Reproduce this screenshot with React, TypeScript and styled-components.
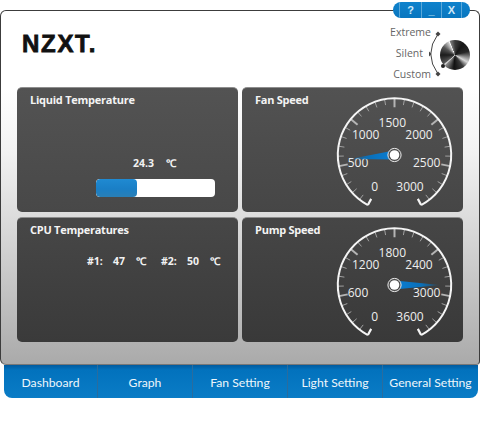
import React from "react";
import styled, { createGlobalStyle } from "styled-components";

const Global = createGlobalStyle`
  html, body { margin: 0; padding: 0; background: #fff; }
  body { width: 480px; height: 440px; overflow: hidden; font-family: "Open Sans", "Liberation Sans", sans-serif; }
`;

const Page = styled.div`
  width: 480px;
  height: 440px;
  padding-top: 10px;
  box-sizing: border-box;
  position: relative;
`;

const WindowFrame = styled.div`
  box-sizing: border-box;
  width: 480px;
  height: 355px;
  border: 1px solid #3c3c3c;
  border-bottom: 1px solid #777;
  border-radius: 6px 6px 4px 6px;
  background: linear-gradient(180deg, #ffffff 0%, #ffffff 22%, #f2f2f2 40%, #d8d8d8 62%, #b4b4b4 92%, #aaaaaa 100%);
  padding: 0 16px;
`;

const Header = styled.div`
  height: 76px;
  display: flex;
  justify-content: space-between;
  align-items: flex-start;
`;

const Logo = styled.div`
  font-family: "Liberation Sans", Arial, sans-serif;
  font-weight: 700;
  font-size: 24px;
  line-height: 24px;
  color: #111;
  padding: 21px 0 0 5px;
  letter-spacing: 1.7px;
  -webkit-text-stroke: 0.8px #111;
`;

const ProfilePicker = styled.div`
  display: flex;
  align-items: flex-start;
  margin-top: 11px;
  margin-right: -7px;
`;

const ProfileLabels = styled.div`
  display: flex;
  flex-direction: column;
  align-items: flex-end;
  font-family: "Open Sans", sans-serif;
  font-size: 10.5px;
  line-height: 21px;
  color: #666;
`;

const ProfileLabel = styled.span<{ $shift: number }>`
  margin-right: ${(p) => p.$shift}px;
`;

const SelectorArc = styled.svg`
  flex: none;
  width: 14px;
  height: 63px;
  margin-left: -4px;
  margin-right: -1px;
`;

const Knob = styled.div`
  position: relative;
  flex: none;
  width: 30px;
  height: 30px;
  margin-top: 18px;
  border-radius: 50%;
  background: conic-gradient(#3a3a3a 0deg, #161616 35deg, #262626 75deg, #aaa 108deg, #d8d8d8 120deg, #3a3a3a 145deg, #111 185deg, #8a8a8a 222deg, #eee 227deg, #555 233deg, #1c1c1c 270deg, #555 305deg, #ccc 333deg, #fff 337deg, #777 341deg, #3a3a3a 360deg);
  &::after {
    content: "";
    position: absolute;
    left: 1px;
    bottom: 2px;
    width: 4px;
    height: 4px;
    border-radius: 50%;
    background: #222;
  }
`;

const Panels = styled.div`
  display: grid;
  grid-template-columns: 221px 221px;
  grid-template-rows: 125px 125px;
  gap: 5px 4px;
`;

const Panel = styled.section<{ $top: string; $bottom: string }>`
  box-sizing: border-box;
  display: flex;
  justify-content: space-between;
  border-radius: 5px;
  border-top: 1px solid #8e8e8e;
  background: linear-gradient(180deg, ${(p) => p.$top}, ${(p) => p.$bottom});
  color: #fff;
  overflow: hidden;
`;

const PanelBody = styled.div`
  flex: 1;
  display: flex;
  flex-direction: column;
  padding: 4px 0 0 13px;
`;

const PanelTitle = styled.h2`
  margin: 0;
  font-family: "Open Sans", sans-serif;
  font-weight: 700;
  font-size: 11px;
  line-height: 15px;
  letter-spacing: -0.25px;
  color: #f4f4f4;
`;

const Reading = styled.div`
  display: grid;
  grid-template-columns: 33px auto;
  font-weight: 700;
  font-size: 10.5px;
  line-height: 14px;
  color: #f2f2f2;
  margin: 49px 0 0 103px;
`;

const BarTrack = styled.div`
  width: 119px;
  height: 18px;
  margin: 9px 0 0 66px;
  border-radius: 4px;
  background: #fff;
  overflow: hidden;
`;

const BarFill = styled.div`
  height: 100%;
  border-radius: 4px;
  background: linear-gradient(180deg, #1f8ad2 0%, #1a7fc6 55%, #2a7fb6 100%);
`;

const CpuReading = styled.div`
  display: grid;
  grid-template-columns: 26px 23px 25px 26px 23px auto;
  margin: 17px 0 0 57px;
  font-weight: 700;
  font-size: 10.5px;
  line-height: 14px;
  color: #f2f2f2;
`;

const GaugeSvg = styled.svg`
  flex: none;
  width: 124px;
  height: 125px;
  margin-top: -1px;
  margin-right: 6px;
`;

const TabBar = styled.nav`
  box-sizing: border-box;
  display: flex;
  width: 474px;
  height: 33px;
  margin-left: 4px;
  background: linear-gradient(180deg, #015b9f 0px, #0272bd 5px, #0a7cc6 100%);
  border-radius: 0 0 8px 8px;
  overflow: hidden;
`;

const Tab = styled.div<{ $w: number }>`
  box-sizing: border-box;
  width: ${(p) => p.$w}px;
  flex: none;
  display: flex;
  align-items: center;
  justify-content: center;
  padding-top: 2px;
  font-family: "Lato", sans-serif;
  font-size: 12.2px;
  color: #eef6fb;
  border-right: 1px solid #2a6c9e;
  &:last-child { border-right: none; }
`;

const WindowControls = styled.div`
  position: absolute;
  left: 393px;
  top: 2px;
  width: 77px;
  height: 16px;
  display: flex;
  border-radius: 8px;
  overflow: hidden;
  background: linear-gradient(180deg, #0f82cc, #0876bf);
  font-family: "Liberation Sans", sans-serif;
  font-weight: 700;
  font-size: 11px;
  color: #cfe8f8;
`;

const ControlButton = styled.div<{ $w: number }>`
  width: ${(p) => p.$w}px;
  flex: none;
  box-sizing: border-box;
  display: flex;
  align-items: center;
  justify-content: center;
  border-right: 1px solid #5aa8da;
  &:last-child { border-right: none; }
`;

type GaugeProps = { labels: number[]; needle: { x: number; y: number }; id: string };

const CX = 61.5;
const CY = 68;
const R = 56.7;

function polar(deg: number, r: number) {
  const a = (deg * Math.PI) / 180;
  return { x: CX + r * Math.sin(a), y: CY - r * Math.cos(a) };
}

const LABEL_POS = [
  { x: 41.7, y: 104 },
  { x: 25, y: 80 },
  { x: 32.7, y: 52 },
  { x: 59.3, y: 39.5 },
  { x: 86, y: 52 },
  { x: 93.7, y: 80 },
  { x: 77, y: 104 },
];

function Gauge({ labels, needle, id }: GaugeProps) {
  const start = -152;
  const step = 304 / 6;
  const ticks: React.ReactNode[] = [];
  for (let i = 1; i < 30; i++) {
    const deg = start + (i * step) / 5;
    const major = i % 5 === 0;
    const p1 = polar(deg, R);
    const p2 = polar(deg, major ? R - 9 : R - 6);
    ticks.push(
      <line key={i} x1={p1.x} y1={p1.y} x2={p2.x} y2={p2.y} stroke={major ? "#b4b4b4" : "#a0a0a0"} strokeWidth={major ? 2 : 1} />
    );
  }
  const s = polar(start, R);
  const e = polar(-start, R);
  const sIn = polar(start, R - 7);
  const eIn = polar(-start, R - 7);
  const dx = needle.x - CX;
  const dy = needle.y - CY;
  const len = Math.hypot(dx, dy);
  const nx = (-dy / len) * 4.5;
  const ny = (dx / len) * 4.5;
  return (
    <GaugeSvg viewBox="0 0 124 125">
      <defs>
        <linearGradient id={id} gradientUnits="userSpaceOnUse" x1={CX} y1={CY} x2={needle.x} y2={needle.y}>
          <stop offset="0.1" stopColor="#0a7cd0" />
          <stop offset="0.6" stopColor="#0a6fb8" />
          <stop offset="1" stopColor="#0a6fb8" stopOpacity="0.1" />
        </linearGradient>
      </defs>
      {ticks}
      <path d={`M${s.x} ${s.y} A${R} ${R} 0 1 1 ${e.x} ${e.y}`} fill="none" stroke="#f4f4f4" strokeWidth={2} />
      <line x1={s.x} y1={s.y} x2={sIn.x} y2={sIn.y} stroke="#f4f4f4" strokeWidth={2.2} />
      <line x1={e.x} y1={e.y} x2={eIn.x} y2={eIn.y} stroke="#f4f4f4" strokeWidth={2.2} />
      {labels.map((l, i) => (
        <text key={l} x={LABEL_POS[i].x} y={LABEL_POS[i].y} textAnchor="middle" fontFamily="'Open Sans', sans-serif" fontSize={12} fill="#efefef">
          {l}
        </text>
      ))}
      <polygon points={`${CX + nx},${CY + ny} ${CX - nx},${CY - ny} ${needle.x},${needle.y}`} fill={`url(#${id})`} />
      <circle cx={CX} cy={CY} r={6.6} fill="#4a4a4a" stroke="#eee" strokeWidth={1} />
      <circle cx={CX} cy={CY} r={4.8} fill="#fff" />
    </GaugeSvg>
  );
}

export default function App() {
  return (
    <Page>
      <Global />
      <WindowFrame>
        <Header>
          <Logo>NZXT.</Logo>
          <ProfilePicker>
            <ProfileLabels>
              <ProfileLabel $shift={0}>Extreme</ProfileLabel>
              <ProfileLabel $shift={8}>Silent</ProfileLabel>
              <ProfileLabel $shift={0}>Custom</ProfileLabel>
            </ProfileLabels>
            <SelectorArc viewBox="0 0 14 63">
              <path d="M11 12 Q-3.5 32 11 52" fill="none" stroke="#444" strokeWidth="1" />
              <path d="M8.5 12 L11 9.5 L13.5 12 L11 14.5 Z" fill="#444" />
              <path d="M2 29.5 L4.5 32 L2 34.5 Z" fill="#444" />
              <path d="M8.5 52 L11 49.5 L13.5 52 L11 54.5 Z" fill="#444" />
            </SelectorArc>
            <Knob />
          </ProfilePicker>
        </Header>
        <Panels>
          <Panel $top="#535353" $bottom="#484848">
            <PanelBody>
              <PanelTitle>Liquid Temperature</PanelTitle>
              <Reading>
                <span>24.3</span>
                <span>℃</span>
              </Reading>
              <BarTrack>
                <BarFill style={{ width: `${(24.3 / 70) * 100}%` }} />
              </BarTrack>
            </PanelBody>
          </Panel>
          <Panel $top="#525252" $bottom="#464646">
            <PanelBody>
              <PanelTitle>Fan Speed</PanelTitle>
            </PanelBody>
            <Gauge id="fan" labels={[0, 500, 1000, 1500, 2000, 2500, 3000]} needle={{ x: 17, y: 72 }} />
          </Panel>
          <Panel $top="#474747" $bottom="#3a3a3a">
            <PanelBody>
              <PanelTitle>CPU Temperatures</PanelTitle>
              <CpuReading>
                <span>#1:</span>
                <span>47</span>
                <span>℃</span>
                <span>#2:</span>
                <span>50</span>
                <span>℃</span>
              </CpuReading>
            </PanelBody>
          </Panel>
          <Panel $top="#464646" $bottom="#393939">
            <PanelBody>
              <PanelTitle>Pump Speed</PanelTitle>
            </PanelBody>
            <Gauge id="pump" labels={[0, 600, 1200, 1800, 2400, 3000, 3600]} needle={{ x: 107, y: 68 }} />
          </Panel>
        </Panels>
      </WindowFrame>
      <TabBar>
        <Tab $w={94}>Dashboard</Tab>
        <Tab $w={95}>Graph</Tab>
        <Tab $w={95}>Fan Setting</Tab>
        <Tab $w={95}>Light Setting</Tab>
        <Tab $w={95}>General Setting</Tab>
      </TabBar>
      <WindowControls>
        <ControlButton $w={7} />
        <ControlButton $w={22}>?</ControlButton>
        <ControlButton $w={20}>_</ControlButton>
        <ControlButton $w={20}>X</ControlButton>
        <ControlButton $w={8} />
      </WindowControls>
    </Page>
  );
}
